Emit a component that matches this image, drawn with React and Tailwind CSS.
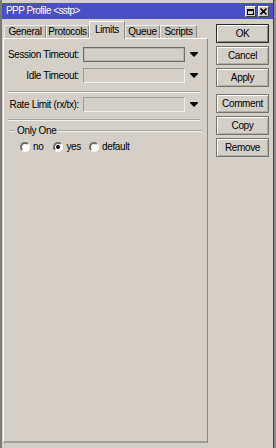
const F = "font-['Liberation_Sans',Arial,sans-serif] tracking-[-0.35px]";

function Arrow() {
  return (
    <svg width="8" height="5" viewBox="0 0 8 5" className="block">
      <path d="M0 0H8V1L4 5L0 1Z" fill="#000" />
    </svg>
  );
}

function Field({ label, focus }) {
  return (
    <div className="flex items-center h-[15px]">
      <div className="w-[76px] text-right whitespace-nowrap leading-none pr-[1px]">{label}</div>
      <div
        className={
          "ml-[3px] w-[102px] h-[15px] border " +
          (focus
            ? "border-[#6e6c68] shadow-[inset_1px_1px_0_#b8b5ae,inset_-1px_-1px_0_#b8b5ae]"
            : "border-t-[#a09d96] border-l-[#a09d96] border-b-[#f0efeb] border-r-[#f0efeb]")
        }
      />
      <div className="ml-[5px]">
        <Arrow />
      </div>
    </div>
  );
}

function Sep() {
  return <div className="ml-[4px] w-[192px] h-[2px] border-t border-t-[#a7a49d] border-b border-b-[#f4f3ef]" />;
}

function Radio({ checked, label }) {
  return (
    <div className="flex items-center">
      <div className="w-[10px] h-[10px] rounded-full border-2 border-t-[#6f6d68] border-l-[#6f6d68] border-b-[#ffffff] border-r-[#ffffff] bg-white flex items-center justify-center">
        {checked && <div className="w-[4px] h-[4px] rounded-full bg-black" />}
      </div>
      <span className="ml-[3px] leading-none">{label}</span>
    </div>
  );
}

function Btn({ children, def }) {
  return (
    <div
      className={
        "h-[19px] w-[53px] flex items-center justify-center border leading-none " +
        (def
          ? "border-[#2a2a2a] shadow-[inset_1px_1px_0_#ffffff,inset_-1px_-1px_0_#8a8781]"
          : "border-[#75736e] shadow-[inset_1px_1px_0_#ffffff,inset_-1px_-1px_0_#b0ada6]")
      }
    >
      {children}
    </div>
  );
}

function Tab({ label, w, active }) {
  if (active) {
    return (
      <div
        className={
          "h-[18px] -mb-[1px] relative z-10 bg-[#d4d0c8] border-t border-l border-t-white border-l-white border-r border-r-[#8c8984] flex items-start justify-center pt-[3px] leading-none " +
          w
        }
      >
        {label}
      </div>
    );
  }
  return (
    <div
      className={
        "h-[13px] bg-[#c8c4bc] border-t border-l border-t-[#eeece8] border-l-[#eeece8] border-r border-r-[#8c8984] flex items-center justify-center leading-none " +
        w
      }
    >
      {label}
    </div>
  );
}

export default function App() {
  return (
    <div className={"flex w-[276px] h-[448px] bg-[#d4d0c8] text-[10px] text-black " + F}>
      <div className="w-[2px] h-full bg-[#7c7a76]" />
      <div className="w-[271px] h-full flex flex-col pt-[3px]">
        <div className="h-[16px] bg-[#4a4fc7] flex items-center pl-[4px] pr-[4px] text-white">
          <span className="leading-none tracking-[-0.55px]">PPP Profile &lt;sstp&gt;</span>
          <div className="ml-auto flex gap-[2px] mt-[1px]">
            <div className="w-[11px] h-[11px] bg-[#d4d0c8] border border-t-white border-l-white border-b-[#404040] border-r-[#404040] flex items-center justify-center">
              <div className="w-[7px] h-[6px] border border-black border-t-2" />
            </div>
            <div className="w-[11px] h-[11px] bg-[#d4d0c8] border border-t-white border-l-white border-b-[#404040] border-r-[#404040] flex items-center justify-center">
              <svg width="7" height="7" viewBox="0 0 7 7">
                <path d="M0.5 0.5L6.5 6.5M6.5 0.5L0.5 6.5" stroke="#000" strokeWidth="1.6" />
              </svg>
            </div>
          </div>
        </div>
        <div className="flex-1 flex">
          <div className="ml-[1px] flex flex-col w-[205px]">
            <div className="h-[19px] flex items-end pl-[1px]">
              <Tab label="General" w="w-[42px]" />
              <Tab label="Protocols" w="w-[43px]" />
              <Tab label="Limits" w="w-[36px]" active />
              <Tab label="Queue" w="w-[35px]" />
              <Tab label="Scripts" w="w-[37px]" />
            </div>
            <div className="h-[405px] border-t border-l border-t-white border-l-white border-r border-r-[#8c8984] border-b-2 border-b-[#a19e97] flex flex-col pt-[8px]">
              <Field label="Session Timeout:" focus />
              <div className="h-[6px]" />
              <Field label="Idle Timeout:" />
              <div className="h-[8px]" />
              <Sep />
              <div className="h-[4px]" />
              <Field label="Rate Limit (rx/tx):" />
              <div className="h-[7px]" />
              <Sep />
              <div className="h-[4px] " />
              <div className="flex items-center h-[12px] ml-[5px] w-[193px]">
                <div className="w-[6px] h-[2px] border-t border-t-[#a7a49d] border-b border-b-[#f4f3ef]" />
                <span className="px-[2px] leading-none">Only One</span>
                <div className="flex-1 h-[2px] border-t border-t-[#a7a49d] border-b border-b-[#f4f3ef]" />
              </div>
              <div className="h-[4px]" />
              <div className="flex items-center ml-[16px] h-[12px]">
                <Radio label="no" />
                <div className="w-[10px]" />
                <Radio label="yes" checked />
                <div className="w-[8px]" />
                <Radio label="default" />
              </div>
            </div>
          </div>
          <div className="ml-[8px] pt-[5px] flex flex-col">
            <Btn def>OK</Btn>
            <div className="h-[3px]" />
            <Btn>Cancel</Btn>
            <div className="h-[3px]" />
            <Btn>Apply</Btn>
            <div className="h-[7px]" />
            <Btn>Comment</Btn>
            <div className="h-[3px]" />
            <Btn>Copy</Btn>
            <div className="h-[3px]" />
            <Btn>Remove</Btn>
          </div>
        </div>
      </div>
      <div className="w-[1px] h-full bg-[#404040]" />
      <div className="w-[2px] h-full bg-[#8e8c88]" />
    </div>
  );
}
